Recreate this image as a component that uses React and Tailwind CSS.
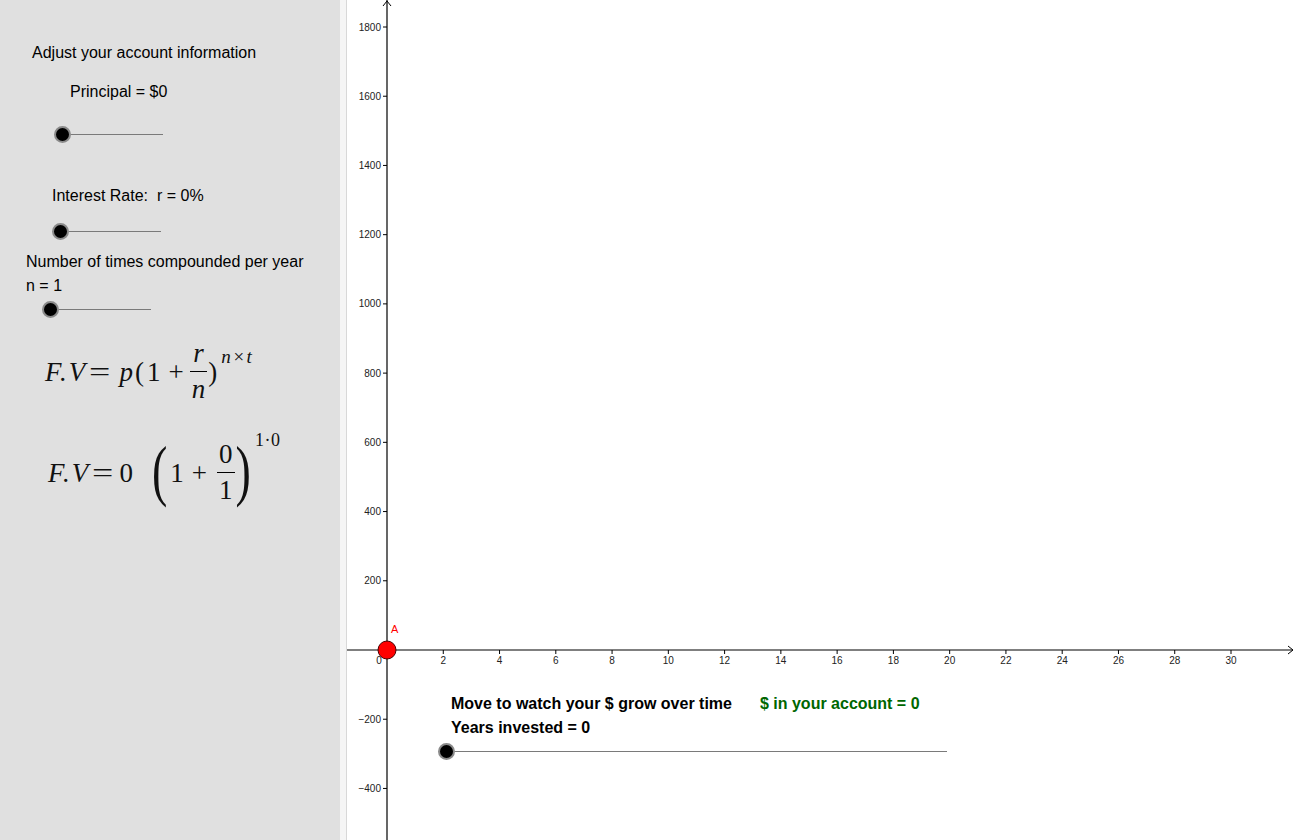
import React from 'react';

const sans = { fontFamily: '"Liberation Sans", Arial, sans-serif' };
const serif = { fontFamily: '"Liberation Serif", "Times New Roman", serif' };

function Slider({ offset, width }) {
  return (
    <div className="flex items-center" style={{ marginLeft: offset }}>
      <div className="w-[17px] h-[17px] rounded-full bg-black border-2 border-[#8a8a8a] shrink-0" />
      <div className="h-px bg-[#7a7a7a]" style={{ width }} />
    </div>
  );
}

function Fraction({ top, bottom }) {
  return (
    <span className="inline-flex flex-col items-center text-[27px] leading-none">
      <span className="pb-[4px] px-[2px]">{top}</span>
      <span className="block w-full h-px bg-black" />
      <span className="pt-[4px] px-[2px]">{bottom}</span>
    </span>
  );
}

function Eq() {
  return <span className="inline-block scale-x-[1.4] ml-[5px] mr-[7px]">=</span>;
}

function Sidebar() {
  return (
    <div className="w-[340px] h-full bg-[#e0e0e0] flex flex-col text-[16px] text-black leading-5" style={sans}>
      <div className="mt-[43px] ml-[32px]">Adjust your account information</div>
      <div className="mt-[19px] ml-[70px]">Principal = $0</div>
      <div className="mt-[24px]"><Slider offset={54} width={92} /></div>
      <div className="mt-[43px] ml-[52px] whitespace-pre">Interest Rate:  r = 0%</div>
      <div className="mt-[17px]"><Slider offset={52} width={92} /></div>
      <div className="mt-[12px] ml-[26px]">Number of times compounded per year</div>
      <div className="mt-[4px] ml-[26px]">n = 1</div>
      <div className="mt-[5px]"><Slider offset={42} width={92} /></div>

      <div className="mt-[22px] ml-[45px] flex items-center text-[27px] text-[#111]" style={serif}>
        <span className="italic tracking-[2px]">F.V</span>
        <Eq />
        <span className="ml-[5px] mr-[2px] italic">p</span>
        <span className="tracking-[3px]">(1</span>
        <span className="ml-[5px] mr-[6px]">+</span>
        <Fraction top={<span className="italic">r</span>} bottom={<span className="italic">n</span>} />
        <span className="ml-[1px]">)</span>
        <span className="self-start mt-[7px] ml-[4px] text-[19px] italic leading-none tracking-[1.5px]">n×t</span>
      </div>

      <div className="mt-[38px] ml-[48px] flex items-center text-[27px] text-[#111]" style={serif}>
        <span className="italic tracking-[2px]">F.V</span>
        <Eq />
        <span className="ml-[2px]">0</span>
        <span className="ml-[19px] inline-block text-[46px] leading-none scale-y-[1.45] -mt-[4px]">(</span>
        <span className="ml-[3px]">1</span>
        <span className="ml-[8px] mr-[10px]">+</span>
        <Fraction top="0" bottom="1" />
        <span className="ml-[1px] inline-block text-[46px] leading-none scale-y-[1.45] -mt-[4px]">)</span>
        <span className="self-start -mt-[10px] ml-[4px] text-[18px] leading-none tracking-[0.5px]">1·0</span>
      </div>
    </div>
  );
}

const xTicks = [2, 4, 6, 8, 10, 12, 14, 16, 18, 20, 22, 24, 26, 28, 30];
const yTicks = [1800, 1600, 1400, 1200, 1000, 800, 600, 400, 200, -200, -400];
const ox = 387;
const oy = 650;
const ux = (1231 - 387) / 30;
const uy = (650 - 27) / 1800;

function Chart() {
  return (
    <svg width="949" height="840" className="block" style={sans}>
      <g transform="translate(-347,0)" fontSize="10" fill="#222">
        <line x1={ox} y1="0" x2={ox} y2="840" stroke="#000" strokeWidth="1.2" />
        <polyline points={`${ox - 4},6 ${ox},1 ${ox + 4},6`} fill="none" stroke="#000" strokeWidth="1" />
        <line x1="347" y1={oy} x2="1293" y2={oy} stroke="#000" strokeWidth="1.2" />
        <polyline points={`1288,${oy - 4} 1293,${oy} 1288,${oy + 4}`} fill="none" stroke="#000" strokeWidth="1" />
        {yTicks.map((v) => {
          const y = oy - v * uy;
          return (
            <g key={v}>
              <line x1={ox - 4} y1={y} x2={ox} y2={y} stroke="#000" />
              <text x={ox - 6} y={y + 3.5} textAnchor="end">{v < 0 ? `−${-v}` : v}</text>
            </g>
          );
        })}
        {xTicks.map((v) => {
          const x = ox + v * ux;
          return (
            <g key={v}>
              <line x1={x} y1={oy} x2={x} y2={oy + 4} stroke="#000" />
              <text x={x} y={oy + 14} textAnchor="middle">{v}</text>
            </g>
          );
        })}
        <text x={ox - 8} y={oy + 14} textAnchor="middle">0</text>
        <circle cx={ox} cy={oy} r="9" fill="#ff0000" stroke="#4a0000" strokeWidth="1" />
        <text x="391" y="633" fill="#ff0000" fontSize="11">A</text>
      </g>
    </svg>
  );
}

export default function App() {
  return (
    <div className="w-[1296px] h-[840px] flex overflow-hidden bg-white">
      <Sidebar />
      <div className="w-[7px] h-full bg-[#f5f5f5] border-r border-[#d8d8d8]" />
      <div className="relative flex-1 h-full bg-white">
        <Chart />
        <div className="absolute left-[104px] top-[694px] text-[16px] font-bold leading-5 text-black" style={sans}>
          <div className="flex">
            <span>Move to watch your $ grow over time</span>
            <span className="ml-[28px] text-[#006600]">$ in your account = 0</span>
          </div>
          <div className="mt-[4px]">Years invested = 0</div>
        </div>
        <div className="absolute left-[91px] top-[743px]">
          <Slider offset={0} width={492} />
        </div>
      </div>
    </div>
  );
}
